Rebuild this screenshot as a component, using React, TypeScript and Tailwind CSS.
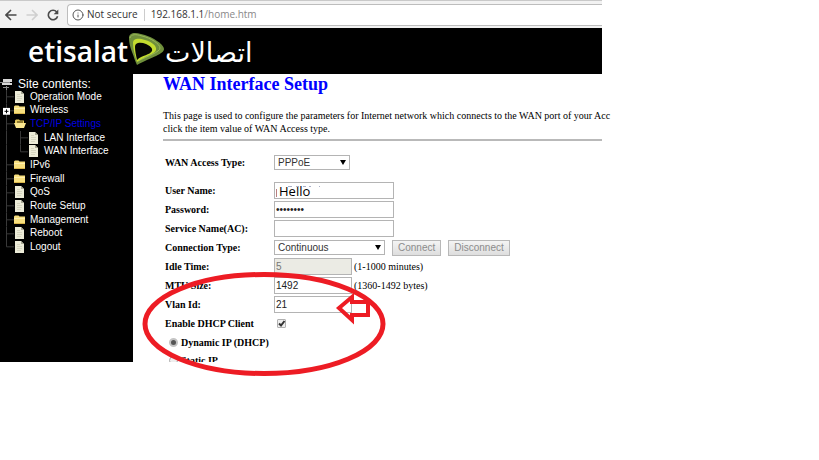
import React, { useState } from "react";
import { Info } from "lucide-react";

type TreeItem = {
  label: string;
  icon: "page" | "folder" | "open";
  level?: number;
  expandable?: boolean;
  active?: boolean;
};

const treeItems: TreeItem[] = [
  { label: "Operation Mode", icon: "page" },
  { label: "Wireless", icon: "folder", expandable: true },
  { label: "TCP/IP Settings", icon: "open", active: true },
  { label: "LAN Interface", icon: "page", level: 2 },
  { label: "WAN Interface", icon: "page", level: 2 },
  { label: "IPv6", icon: "folder" },
  { label: "Firewall", icon: "folder" },
  { label: "QoS", icon: "page" },
  { label: "Route Setup", icon: "page" },
  { label: "Management", icon: "folder" },
  { label: "Reboot", icon: "page" },
  { label: "Logout", icon: "page" },
];

const fieldClass =
  "h-[17px] border border-[#b4b4b4] bg-white px-px font-['Liberation_Sans',Arial,sans-serif] text-[10px] leading-[15px] text-[#222] outline-none";
const buttonClass =
  "h-4 border border-[#b8b8b8] bg-linear-to-b from-[#f4f4f4] to-[#dedede] px-[5px] font-['Liberation_Sans',Arial,sans-serif] text-[10px] leading-[14px] text-[#8c8c8c]";

function TreeIcon({ icon }: { icon: TreeItem["icon"] }) {
  if (icon === "page") {
    return (
      <svg viewBox="0 0 11 12" className="h-3 w-[11px] shrink-0">
        <path d="M1 0h6l3 3v9H1z" fill="#ecebd8" />
        <path d="M7 0v3h3z" fill="#a9a894" />
        <path d="M3 3.5h3M3 5.5h5M3 7.5h5M3 9.5h4" stroke="#d6d5c0" strokeWidth="1" />
      </svg>
    );
  }
  if (icon === "open") {
    return (
      <svg viewBox="0 0 12 12" className="h-3 w-3 shrink-0">
        <path d="M1 2.5 2 1.5h3l1 1h4V6H1z" fill="#e5c95c" />
        <path d="M0 5h12l-2 5H2z" fill="#fbe892" />
        <path d="M3 4h6" stroke="#3b2f08" strokeWidth="1" />
      </svg>
    );
  }
  return (
    <svg viewBox="0 0 11 12" className="h-3 w-[11px] shrink-0">
      <path d="M0 2.5 1 1.5h3.5l1 1H11V10H0z" fill="#f7df7e" />
      <path d="M0 4.5h11" stroke="#fff0ae" strokeWidth="1" />
      <path d="M0 9.5h11" stroke="#d8b44a" strokeWidth="1" />
    </svg>
  );
}

// guides of the tree, drawn in the space left of each icon
function TreeGuide({ item, last, index }: { item: TreeItem; last: boolean; index: number }) {
  const nested = item.level === 2;
  return (
    <svg
      viewBox={nested ? "0 0 28 14" : "0 0 14 14"}
      preserveAspectRatio="none"
      className={nested ? "h-full w-7 shrink-0" : "h-full w-3.5 shrink-0"}
    >
      <path
        d={last ? "M6.5 0V7H14" : nested ? "M6.5 0V14" : "M6.5 0V14M6.5 7H14"}
        stroke="#3a3a3a"
        fill="none"
      />
      {nested && <path d={index === 4 ? "M20.5 0V7H28" : "M20.5 0V14M20.5 7H28"} stroke="#3a3a3a" fill="none" />}
      {item.expandable && (
        <g>
          <rect x="3" y="4" width="7" height="7" fill="#fff" />
          <path d="M4.5 7.5h4M6.5 5.5v4" stroke="#000" />
        </g>
      )}
    </svg>
  );
}

function AddressBar() {
  return (
    <div className="flex h-7 items-center border-t border-[#c9c9c9] bg-[#f2f2f2] pl-[5px]">
      <div className="flex shrink-0 items-center gap-[9px]">
        <button aria-label="Back">
          <svg viewBox="0 0 12 12" className="h-3 w-3" fill="none" stroke="#4a4a4a" strokeWidth="1.6">
            <path d="M11.5 6H1.5M6 1 1 6l5 5" />
          </svg>
        </button>
        <button aria-label="Forward">
          <svg viewBox="0 0 12 12" className="h-3 w-3" fill="none" stroke="#cfcfcf" strokeWidth="1.6">
            <path d="M.5 6h10M6 1l5 5-5 5" />
          </svg>
        </button>
        <button aria-label="Reload">
          <svg viewBox="0 0 12 12" className="h-3 w-3">
            <path d="M9.7 3A4.7 4.7 0 1 0 10.6 7.2" fill="none" stroke="#4a4a4a" strokeWidth="1.6" />
            <path d="M11.3.6V5.2H6.7z" fill="#4a4a4a" />
          </svg>
        </button>
      </div>
      <div className="ml-2 flex h-[22px] flex-1 items-center rounded-l-sm border border-r-0 border-[#bdbdbd] bg-white pl-1 font-['Open_Sans',sans-serif] text-[10px] text-[#333]">
        <Info className="mr-[3px] h-3 w-3 text-[#555]" strokeWidth={2} />
        <span>Not secure</span>
        <span className="mx-1.5 h-3 w-px bg-[#ccc]" />
        <span>
          192.168.1.1<span className="text-[#888]">/home.htm</span>
        </span>
      </div>
    </div>
  );
}

function Logo() {
  return (
    <div className="flex h-[46px] items-center bg-black pl-7 text-white">
      <span className="font-['Open_Sans',sans-serif] text-[28px] leading-none font-semibold">etisalat</span>
      <svg viewBox="0 0 37 38" className="h-[38px] w-[37px] shrink-0">
        <path d="M1 6C1 1 6 0 13 2C23 4 36 12 36 17C36 22 24 25 9 33C7 29 6 25 4 20C2 15 1 10 1 6Z" fill="#6f8f3c" />
        <path d="M2 6C3 2 8 2 14 4C23 6 32 12 32 16C32 20 20 24 10 29" fill="none" stroke="#9bb75a" />
        <path d="M5 11C5 6 11 6 17 8C24 10 29 14 28 18C27 22 17 24 9 30C7 24 5 17 5 11Z" fill="#c3dc2f" />
        <path d="M7 15C7 10 13 10 18 12C22 14 25 16 24 19C22 23 14 23 9 28C8 23 7 19 7 15Z" fill="#050505" />
      </svg>
      <span lang="ar" dir="rtl" className="pt-0.5 font-['DejaVu_Sans',sans-serif] text-[27px] leading-none">
        اتصالات
      </span>
    </div>
  );
}

function Sidebar() {
  return (
    <nav className="w-[133px] shrink-0 bg-black font-['Liberation_Sans',Arial,sans-serif] text-[10px] text-white">
      <div className="flex h-4 items-center gap-1 pt-1 text-[12px]">
        <svg viewBox="0 0 14 12" className="h-3 w-3.5">
          <path d="M3 1h9v3H3zM2 5h10v2H2z" fill="#d8d8d8" />
          <path d="M0 4.5h10M3 9.5h6M6.5 8v4" stroke="#8a8a8a" />
        </svg>
        Site contents:
      </div>
      <ul className="grid h-[164px] auto-rows-fr">
        {treeItems.map((item, index) => (
          <li key={item.label} className="flex min-h-0 items-center">
            <TreeGuide item={item} last={index === treeItems.length - 1} index={index} />
            <TreeIcon icon={item.icon} />
            <a href="#" className={item.active ? "ml-1 leading-none text-[#0000e0]" : "ml-[5px] leading-none"}>
              {item.label}
            </a>
          </li>
        ))}
      </ul>
    </nav>
  );
}

function Row({ label, id, children }: { label: string; id: string; children: React.ReactNode }) {
  return (
    <div className="flex h-[19px] items-center">
      <label htmlFor={id} className="w-[109px] shrink-0 font-bold">
        {label}
      </label>
      {children}
    </div>
  );
}

function SelectBox({ id, options, wide }: { id: string; options: string[]; wide?: boolean }) {
  return (
    <div className={wide ? "relative w-[111px] shrink-0" : "relative w-[76px] shrink-0"}>
      <select
        id={id}
        className="block h-[15px] w-full appearance-none border border-[#b4b4b4] bg-white pl-[3px] font-['Liberation_Sans',Arial,sans-serif] text-[10px] leading-[13px] text-[#333]"
      >
        {options.map((option) => (
          <option key={option}>{option}</option>
        ))}
      </select>
      <svg viewBox="0 0 6 5" className="pointer-events-none absolute top-[5px] right-1 h-[5px] w-1.5">
        <path d="M0 0h6L3 5z" fill="#000" />
      </svg>
    </div>
  );
}

function WanForm() {
  const [dhcp, setDhcp] = useState(true);
  const [mode, setMode] = useState("dynamic");

  return (
    <form className="pl-0.5">
      <div className="mt-3">
        <Row label="WAN Access Type:" id="access">
          <SelectBox id="access" options={["PPPoE"]} />
        </Row>
      </div>
      <div className="mt-[9px]">
        <Row label="User Name:" id="user">
          <div className="relative">
            <input
              id="user"
              defaultValue="Hello"
              className="block h-[17px] w-[120px] border border-[#b4b4b4] bg-white pl-1 font-['Open_Sans',sans-serif] text-[13px] leading-[15px] text-black"
            />
            {/* leftovers of the painted-over name */}
            <svg viewBox="0 0 50 12" className="pointer-events-none absolute top-1 left-0.5 h-3 w-[50px]">
              <path d="M.5 3v8" stroke="#b98080" />
              <path d="M12 .5h4M20 .5h3M27 .5h3M33 .5h2M43 .5h1" stroke="#aab0c8" />
            </svg>
          </div>
        </Row>
        <Row label="Password:" id="password">
          <input id="password" type="password" defaultValue="password" className={`${fieldClass} w-[120px]`} />
        </Row>
        <Row label="Service Name(AC):" id="service">
          <input id="service" className={`${fieldClass} w-[120px]`} />
        </Row>
        <Row label="Connection Type:" id="connection">
          <SelectBox id="connection" options={["Continuous", "Connect on Demand", "Manual"]} wide />
          <button type="button" disabled className={`${buttonClass} ml-[7px]`}>
            Connect
          </button>
          <button type="button" disabled className={`${buttonClass} ml-[7px]`}>
            Disconnect
          </button>
        </Row>
        <Row label="Idle Time:" id="idle">
          <input
            id="idle"
            disabled
            defaultValue="5"
            className="h-[17px] w-[78px] border border-[#b4b4b4] bg-[#ebebe4] px-px font-['Liberation_Sans',Arial,sans-serif] text-[10px] text-[#777]"
          />
          <span className="ml-0.5">(1-1000 minutes)</span>
        </Row>
        <Row label="MTU Size:" id="mtu">
          <input id="mtu" defaultValue="1492" className={`${fieldClass} w-[78px]`} />
          <span className="ml-0.5">(1360-1492 bytes)</span>
        </Row>
        <Row label="Vlan Id:" id="vlan">
          <input id="vlan" defaultValue="21" className={`${fieldClass} w-[78px]`} />
        </Row>
        <Row label="Enable DHCP Client" id="dhcp">
          <span className="relative ml-[3px] h-[9px] w-[9px]">
            <input
              id="dhcp"
              type="checkbox"
              checked={dhcp}
              onChange={(e) => setDhcp(e.target.checked)}
              className="block h-[9px] w-[9px] appearance-none rounded-[1px] border border-[#b0b0b0] bg-[#eee]"
            />
            {dhcp && (
              <svg viewBox="0 0 9 9" className="pointer-events-none absolute inset-0 h-[9px] w-[9px]">
                <path d="M2 4.5 4 6.5 7.5 2" stroke="#333" strokeWidth="2" fill="none" />
              </svg>
            )}
          </span>
        </Row>
      </div>
      <div className="h-[29px] overflow-hidden pl-1">
        {[
          { value: "dynamic", label: "Dynamic IP (DHCP)" },
          { value: "static", label: "Static IP" },
        ].map((option) => (
          <div key={option.value} className="flex h-[18px] items-center gap-[3px]">
            <input
              id={option.value}
              type="radio"
              name="mode"
              checked={mode === option.value}
              onChange={() => setMode(option.value)}
              className="h-[9px] w-[9px] appearance-none rounded-full border border-[#a8a8a8] bg-[#eee] checked:border-2 checked:border-[#c4c4c4] checked:bg-[#555]"
            />
            <label htmlFor={option.value} className="pt-0.5 leading-3 font-bold">
              {option.label}
            </label>
          </div>
        ))}
      </div>
    </form>
  );
}

export default function App() {
  return (
    <div className="relative min-h-screen bg-white">
      <div className="w-[73.5%]">
        <AddressBar />
        <Logo />
        <div className="flex">
          <Sidebar />
          <main className="min-w-0 flex-1 pl-[30px] font-['Liberation_Serif','Times_New_Roman',serif] text-[10px] text-black">
            <h1 className="text-[18px] leading-5 font-bold text-[#0000ff]">WAN Interface Setup</h1>
            <p className="mt-[15px] leading-[13px] whitespace-nowrap">
              This page is used to configure the parameters for Internet network which connects to the WAN port of your Acc
              <br />
              click the item value of WAN Access type.
            </p>
            <hr className="mt-1 border-t-2 border-[#b9b9b9]" />
            <WanForm />
          </main>
        </div>
      </div>

      {/* hand-drawn marker around the VLAN settings */}
      <svg viewBox="0 0 250 110" className="pointer-events-none absolute top-[270px] left-[140px] h-[110px] w-[250px]">
        <g fill="none" stroke="#ed1c24">
          <ellipse cx="124" cy="54" rx="119" ry="49.5" strokeWidth="5" />
          <path d="M199 38 212 27V32H228V45H212V50Z" strokeWidth="4" />
        </g>
      </svg>
    </div>
  );
}
